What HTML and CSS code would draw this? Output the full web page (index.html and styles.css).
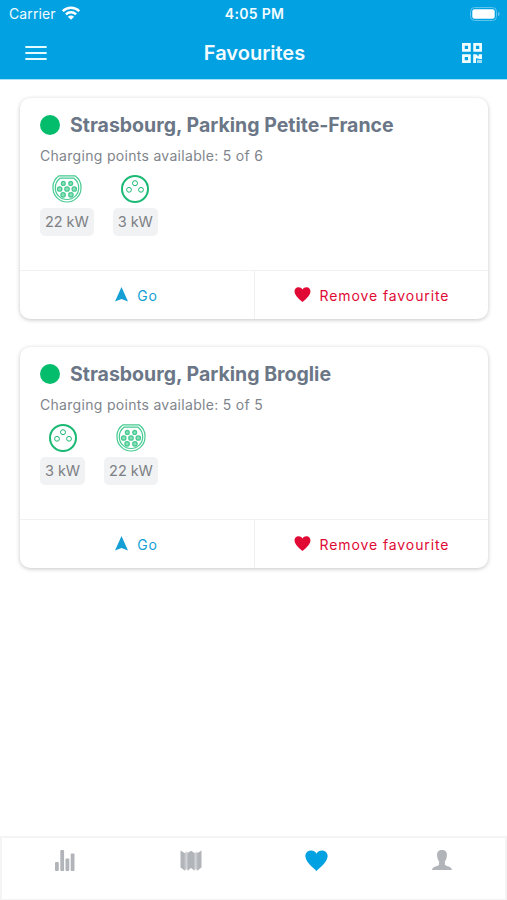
FILE: index.html
```html
<!DOCTYPE html>
<html lang="en">
<head>
<meta charset="utf-8">
<title>Favourites</title>
<link rel="stylesheet" href="styles.css">
</head>
<body>
<svg width="0" height="0" class="defs" aria-hidden="true">
  <symbol id="type2" viewBox="0 0 30 28">
    <path d="M7 .8H23A14 14 0 0 1 29 13A14 14 0 0 1 1 13A14 14 0 0 1 7 .8Z" fill="none" stroke="currentColor" stroke-width="1.200"/>
    <path d="M8 3.200H22A12 12 0 0 1 26.700 13A11.700 11.500 0 0 1 3.300 13A12 12 0 0 1 8 3.200Z" fill="none" stroke="currentColor" stroke-width="1.200"/>
    <g fill="#8ee0b8" stroke="currentColor" stroke-width="1.300">
      <circle cx="11.300" cy="8.400" r="1.900"/><circle cx="18.700" cy="8.400" r="1.900"/>
      <circle cx="7.700" cy="14" r="2.200"/><circle cx="15" cy="14" r="2.200"/><circle cx="22.300" cy="14" r="2.200"/>
      <circle cx="11.100" cy="19.800" r="2.200"/><circle cx="18.900" cy="19.800" r="2.200"/>
    </g>
  </symbol>
  <symbol id="socket" viewBox="0 0 30 28">
    <circle cx="15" cy="14" r="13" fill="none" stroke="currentColor" stroke-width="2"/>
    <g fill="none" stroke="currentColor" stroke-width="1">
      <circle cx="15" cy="8.200" r="2.500"/><circle cx="9" cy="14.800" r="2.400"/><circle cx="21" cy="14.800" r="2.400"/>
    </g>
  </symbol>
  <symbol id="heart" viewBox="0 0 24 22">
    <path d="M12 22C9 19.300 1 13 .4 7.200C-.1 3 3 .5 6.200.5C8.700.5 10.800 1.800 12 3.800C13.200 1.800 15.300.5 17.800.5C21 .5 24.100 3 23.600 7.200C23 13 15 19.300 12 22Z" fill="currentColor"/>
  </symbol>
  <symbol id="arrow" viewBox="0 0 13 15">
    <path d="M6.500 0L13 14.500L6.500 12L0 14.500Z" fill="currentColor"/>
  </symbol>
</svg>
<header class="header">
  <div class="status">
    <div class="carrier"><span>Carrier</span>
      <svg width="18" height="14" viewBox="0 0 18 14"><g fill="none" stroke="#fff" stroke-width="2.400"><path d="M.8 5.200A11.600 11.600 0 0 1 17.200 5.200"/><path d="M3.900 8.300A7.300 7.300 0 0 1 14.100 8.300"/></g><path d="M5.900 10.700A4.400 4.400 0 0 1 12.100 10.700L9 13.800Z" fill="#fff"/></svg>
    </div>
    <div class="time">4:05 PM</div>
    <div class="power"><svg width="30" height="14" viewBox="0 0 30 14"><rect x=".5" y=".5" width="26" height="13" rx="4" fill="none" stroke="#5fc3ec"/><rect x="2.300" y="2.300" width="22.400" height="9.400" rx="2.200" fill="#fff"/><path d="M28 4.800Q29.700 5.400 29.700 7T28 9.200Z" fill="#5fc3ec"/></svg></div>
  </div>
  <div class="toolbar">
    <svg width="22" height="14" viewBox="0 0 22 14"><path d="M1 1H21M1 7H21M1 13H21" stroke="#e4fbff" stroke-width="1.800" stroke-linecap="round"/></svg>
    <h1>Favourites</h1>
    <svg width="20" height="20" viewBox="0 0 20 20"><g fill="none" stroke="#f0fdff" stroke-width="2.700"><path d="M1.400 1.400H7.400V7.400H1.400ZM12.600 1.400H18.600V7.400H12.600ZM1.400 12.600H7.400V18.600H1.400Z"/></g><path d="M11.200 11.300H14.200L16.600 13.600V11.300H20V16H17.500L14 15.300V19.900H11.200Z" fill="#f0fdff"/><path d="M15 16.800H20V20H15Z" fill="#9cdcf5"/></svg>
  </div>
</header>
<main class="list">
  <article class="card">
    <div class="body">
      <h2><i class="dot"></i><span>Strasbourg, Parking Petite-France</span></h2>
      <p>Charging points available: 5 of 6</p>
      <div class="plugs">
        <div class="plug"><svg class="light"><use href="#type2"/></svg><span>22 kW</span></div>
        <div class="plug"><svg><use href="#socket"/></svg><span>3 kW</span></div>
      </div>
    </div>
    <div class="actions">
      <div class="action go"><svg width="13" height="15"><use href="#arrow"/></svg><span>Go</span></div>
      <div class="action remove"><svg width="17" height="15"><use href="#heart"/></svg><span>Remove favourite</span></div>
    </div>
  </article>
  <article class="card">
    <div class="body">
      <h2><i class="dot"></i><span>Strasbourg, Parking Broglie</span></h2>
      <p>Charging points available: 5 of 5</p>
      <div class="plugs">
        <div class="plug"><svg><use href="#socket"/></svg><span>3 kW</span></div>
        <div class="plug"><svg class="light"><use href="#type2"/></svg><span>22 kW</span></div>
      </div>
    </div>
    <div class="actions">
      <div class="action go"><svg width="13" height="15"><use href="#arrow"/></svg><span>Go</span></div>
      <div class="action remove"><svg width="17" height="15"><use href="#heart"/></svg><span>Remove favourite</span></div>
    </div>
  </article>
</main>
<nav class="tabs">
  <div><svg width="20" height="21" viewBox="0 0 20 21" fill="currentColor"><rect y="12" width="3.800" height="9" rx="1"/><rect x="5.300" width="3.800" height="21" rx="1"/><rect x="10.500" y="8.500" width="3.800" height="12.500" rx="1"/><rect x="15.700" y="3.500" width="3.800" height="17.500" rx="1"/></svg></div>
  <div><svg width="22" height="21" viewBox="0 0 22 21"><path d="M.5.500L4.600 3V20.500L.5 17.500ZM7.500 3L11 .8L14.500 3V20.500L11 18L7.500 20.500ZM17.500 3L21.500.5V17.500L17.500 20.500Z" fill="#b1b4b9"/><path d="M4.600 3L7.500 1.300V18.500L4.600 20.500ZM14.500 3L17.500 1.800V20.500L14.500 18.500Z" fill="#cfd1d4"/><path d="M4.800 3V20.300M8 3V20.300M14 3V20.300M17.300 3V20.300" stroke="#b1b4b9"/></svg></div>
  <div class="active"><svg width="23" height="21"><use href="#heart"/></svg></div>
  <div><svg width="20" height="20" viewBox="0 0 20 20"><path d="M10 0C13.200 0 15 1.500 14.900 5C14.800 8.500 14 10 12.900 11.500V14.800C14 16.500 19.500 16.200 20 20H0C.5 16.200 6 16.500 7.100 14.800V11.500C6 10 5.200 8.500 5.100 5C5 1.500 6.800 0 10 0Z" fill="currentColor"/></svg></div>
</nav>
</body>
</html>
```

FILE: styles.css
```css
* { box-sizing: border-box; }
body {
  margin: 0;
  height: 900px;
  display: flex;
  flex-direction: column;
  background: #fff;
  font-family: Inter, "Liberation Sans", sans-serif;
  overflow: hidden;
}
svg { display: block; flex: none; }
.defs { position: absolute; }
h1, h2, p { margin: 0; }
.header { height: 79px; background: #02a1e2; color: #f2fcff; flex: none; box-shadow: 0 1px 0 #a9e2f7; }
.status {
  height: 27px;
  display: grid;
  grid-template-columns: 1fr auto 1fr;
  align-items: center;
  padding: 0 7px 0 9px;
  font-size: 14px;
}
.carrier { display: flex; align-items: center; gap: 6px; letter-spacing: .1px; }
.carrier svg { margin-top: -1px; }
.time { font-weight: 600; font-size: 14px; letter-spacing: .3px; }
.power { display: flex; justify-content: flex-end; }
.toolbar {
  height: 52px;
  display: grid;
  grid-template-columns: 22px 1fr 20px;
  align-items: center;
  padding: 0 25px 0 25px;
}
h1 { font-size: 20px; font-weight: 600; text-align: center; letter-spacing: 0; line-height: 24px; margin-top: -1px; }
.list { padding: 19px 19px 0 20px; display: flex; flex-direction: column; gap: 28px; flex: 1; }
.card {
  height: 221px;
  border-radius: 10px;
  background: #fff;
  display: flex;
  flex-direction: column;
  box-shadow: 0 1px 4px rgba(0, 0, 0, .23);
}
.body { flex: 1; padding: 15px 20px 0; }
h2 { display: flex; align-items: center; gap: 10px; height: 24px; font-size: 19.500px; font-weight: 700; color: #6b7687; white-space: nowrap; }
.dot { width: 20px; height: 20px; border-radius: 50%; background: #04bd6c; }
p { margin-top: 9px; height: 20px; line-height: 20px; font-size: 14px; letter-spacing: .3px; color: #7f858c; }
.plugs { display: flex; gap: 19px; margin-top: 9px; }
.plug { display: flex; flex-direction: column; align-items: center; gap: 5px; color: #1bb974; }
.plug svg { width: 30px; height: 28px; }
.plug .light { color: #45ca91; }
.plug span { height: 28px; line-height: 28px; padding: 0 5px; border-radius: 5px; background: #f1f2f3; color: #7c8084; font-size: 14.500px; letter-spacing: -.05px; }
.actions { height: 49px; display: flex; border-top: 1px solid #f1f1f1; }
.action { flex: 1; display: flex; align-items: center; justify-content: center; gap: 9px; font-size: 14px; letter-spacing: .9px; padding: 1px 1px 0 0; }
.action svg { margin-top: -2px; }
.go { color: #159fd5; border-right: 1px solid #f1f1f1; }
.remove { color: #e00a35; padding-right: 0; }
.tabs { height: 64px; border: 2px solid #f4f4f4; border-bottom-width: 1px; display: grid; grid-template-columns: repeat(4, 1fr); color: #b1b4b8; }
.tabs div { display: flex; justify-content: center; padding-top: 12px; }
.tabs .active { color: #02a1e2; }
```
